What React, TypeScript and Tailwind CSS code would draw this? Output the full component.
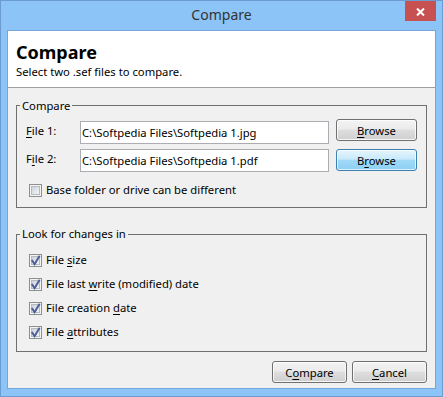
import React from "react";

function U({ children }: { children: React.ReactNode }) {
  return <span className="underline decoration-1 underline-offset-[2px]">{children}</span>;
}

function WinButton({ children, hot, w }: { children: React.ReactNode; hot?: boolean; w: "browse" | "dlg" }) {
  const base = "h-[22px] rounded-[3px] border flex items-center justify-center leading-[15px] shrink-0";
  const skin = hot
    ? "border-[#3c7fb1] bg-[linear-gradient(to_bottom,#e6f5fd_0%,#c9eafb_45%,#a1d9f7_52%,#8ccff3_100%)] shadow-[inset_0_0_0_1px_rgba(255,255,255,0.7)]"
    : "border-[#707070] bg-[linear-gradient(to_bottom,#f3f3f3_0%,#ebebeb_45%,#dddddd_52%,#cfcfcf_100%)] shadow-[inset_0_0_0_1px_rgba(255,255,255,0.8)]";
  const width = w === "browse" ? "w-[81px]" : "w-[75px]";
  return <div className={`${base} ${skin} ${width}`}>{children}</div>;
}

function CheckBox({ checked }: { checked?: boolean }) {
  return (
    <svg width="13" height="13" viewBox="0 0 13 13" className="shrink-0 mt-[2px]">
      <defs>
        <linearGradient id="cbfill" x1="0" y1="0" x2="1" y2="1">
          <stop offset="0" stopColor="#cbd0d7" />
          <stop offset="1" stopColor="#f6f6f6" />
        </linearGradient>
      </defs>
      <rect x="0.5" y="0.5" width="12" height="12" fill="#f4f4f4" stroke="#8e8f8f" />
      <rect x="2.5" y="2.5" width="8" height="8" fill="url(#cbfill)" stroke="#b7bcc3" />
      {checked && (
        <path d="M2.8 6 L5.6 10.2 L10.6 1.8" stroke="#4a5f97" strokeWidth="2" fill="none" strokeLinejoin="miter" />
      )}
    </svg>
  );
}

function Field({ value }: { value: string }) {
  return (
    <div className="w-[249px] h-[23px] border border-[#abadb3] bg-white pl-[1px] leading-[21px] whitespace-nowrap overflow-hidden shrink-0">
      {value}
    </div>
  );
}

function CheckRow({ checked, children, first }: { checked?: boolean; children: React.ReactNode; first?: boolean }) {
  return (
    <div className={`flex items-start pl-[12px] gap-[4px] ${first ? "mt-[11px]" : "mt-[9px]"}`}>
      <CheckBox checked={checked} />
      <span className="leading-[15px] whitespace-nowrap">{children}</span>
    </div>
  );
}

export default function App() {
  return (
    <div className="w-[443px] h-[397px] bg-[#8cc4f7] border border-[#6c9ccf] flex flex-col font-['Noto_Sans',sans-serif] text-[11.25px] text-black">
      {/* Title bar */}
      <div className="h-[29px] grid grid-cols-[1fr_auto_1fr] shrink-0">
        <div />
        <div className="pt-[4px] leading-[20px] text-[14px] text-[#333333]">Compare</div>
        <div className="flex justify-end pr-[6px]">
          <div className="w-[31px] h-[20px] bg-[#c75050] flex items-center justify-center pt-[2px]">
            <svg width="9" height="8" viewBox="0 0 9 8">
              <path d="M1 0.5 L8 7.5 M8 0.5 L1 7.5" stroke="#ffffff" strokeWidth="2" />
            </svg>
          </div>
        </div>
      </div>

      {/* Client area */}
      <div className="mx-[6px] mb-[7px] flex-1 border border-[#76a6d8] bg-[#f0f0f0] flex flex-col">
        <div className="h-[57px] bg-white border-b border-[#a0a0a0] px-[8px] pt-[10px] shrink-0">
          <div className="text-[18px] font-bold leading-[22px]">Compare</div>
          <div className="mt-[1px] leading-[15px]">Select two .sef files to compare.</div>
        </div>

        <div className="px-[8px] flex flex-col">
          {/* Group 1 */}
          <div className="mt-[17px] h-[103px] border border-[#707070] flex flex-col">
            <span className="self-start -mt-[8px] ml-[3px] px-[2px] bg-[#f0f0f0] leading-[15px]">Compare</span>
            <div className="flex items-start mt-[6px] pl-[9px]">
              <span className="w-[54px] mt-[4px] leading-[15px] shrink-0">
                <U>F</U>ile 1:
              </span>
              <div className="mt-[2px]">
                <Field value="C:\Softpedia Files\Softpedia 1.jpg" />
              </div>
              <div className="ml-[7px]">
                <WinButton w="browse">
                  <span>
                    <U>B</U>rowse
                  </span>
                </WinButton>
              </div>
            </div>
            <div className="flex items-start mt-[5px] pl-[9px]">
              <span className="w-[54px] mt-[2px] leading-[15px] shrink-0">
                F<U>i</U>le 2:
              </span>
              <Field value="C:\Softpedia Files\Softpedia 1.pdf" />
              <div className="ml-[7px]">
                <WinButton w="browse" hot>
                  <span>
                    B<U>r</U>owse
                  </span>
                </WinButton>
              </div>
            </div>
            <div className="flex items-start pl-[12px] gap-[4px] mt-[10px]">
              <CheckBox />
              <span className="leading-[15px] whitespace-nowrap">Base folder or drive can be different</span>
            </div>
          </div>

          {/* Group 2 */}
          <div className="mt-[26px] h-[118px] border border-[#707070] flex flex-col">
            <span className="self-start -mt-[9px] ml-[3px] px-[2px] bg-[#f0f0f0] leading-[15px]">Look for changes in</span>
            <CheckRow checked first>
              File <U>s</U>ize
            </CheckRow>
            <CheckRow checked>
              File last <U>w</U>rite (modified) date
            </CheckRow>
            <CheckRow checked>
              File creation <U>d</U>ate
            </CheckRow>
            <CheckRow checked>
              File <U>a</U>ttributes
            </CheckRow>
          </div>

          {/* Buttons */}
          <div className="mt-[9px] flex justify-end gap-[5px]">
            <WinButton w="dlg">
              <span>
                C<U>o</U>mpare
              </span>
            </WinButton>
            <WinButton w="dlg">
              <span>
                <U>C</U>ancel
              </span>
            </WinButton>
          </div>
        </div>
      </div>
    </div>
  );
}
